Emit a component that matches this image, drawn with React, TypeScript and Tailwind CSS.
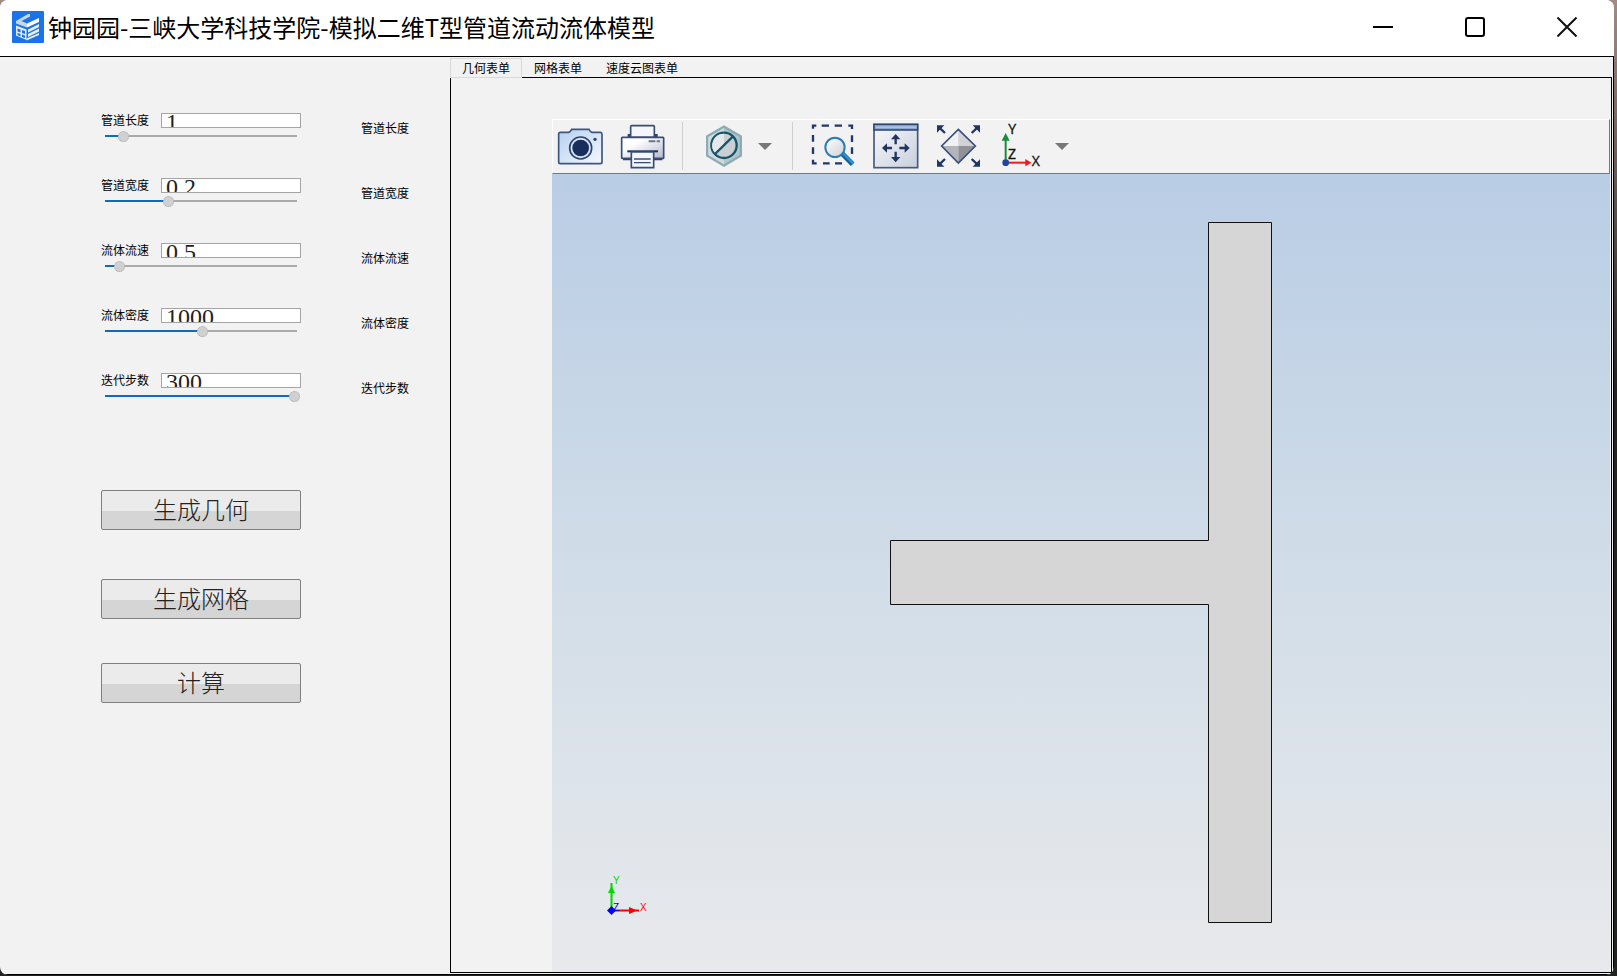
import { useState } from 'react';
import type { ReactNode } from 'react';

type Param = { id: string; label: string; value: number; max: number; step: number };

const params: Param[] = [
  { id: 'length', label: '管道长度', value: 1, max: 14, step: 1 },
  { id: 'width', label: '管道宽度', value: 0.2, max: 0.64, step: 0.01 },
  { id: 'speed', label: '流体流速', value: 0.5, max: 10, step: 0.1 },
  { id: 'density', label: '流体密度', value: 1000, max: 2000, step: 10 },
  { id: 'steps', label: '迭代步数', value: 300, max: 300, step: 1 },
];

const tabs = ['几何表单', '网格表单', '速度云图表单'];

const AppLogo = () => (
  <svg viewBox="0 0 32 32" className="size-8" aria-hidden="true">
    <rect width="32" height="32" rx="1" fill="#1a73e8" />
    <path d="M4 10 L16 3 H18 V5.500 L9.500 10 L15 12.500 V16.500 L4 12.500 Z" fill="#c9d6e6" />
    <path d="M15 12.500 L27 7 V11 L15 16.500 Z" fill="#fff" />
    <path d="M4 14.500 L14.500 18.500 V29 L4 24.500 Z M5.500 17.500 V20.500 L8.500 21.500 V18.500 Z M10 19 V22 L13 23 V20 Z M5.500 22 V24 L8.500 25.500 V23 Z M10 23.500 V26 L13 27 V24.500 Z" fill="#e3eaf3" fillRule="evenodd" />
    <path d="M16 18.500 L27 13 V16 L16 21.500 Z M16 23 L27 17.500 V20.500 L16 26 Z M14.500 27.500 L27 22 V24 L14.500 29.500 Z" fill="#e9eef5" />
  </svg>
);

const CameraIcon = () => (
  <svg viewBox="48 36 144 144" className="size-12">
    <defs>
      <linearGradient id="cam" x1="0" y1="0" x2="1" y2="1">
        <stop offset="0" stopColor="#b5d0ef" />
        <stop offset="1" stopColor="#f4f8fc" />
      </linearGradient>
    </defs>
    <path d="M60 67 H86 Q91 66 95 58 H147 Q151 66 156 67 H182 Q186 68 186 73 V156 Q186 161 181 161 H61 Q56 161 56 156 V72 Q56 67 60 67 Z" fill="url(#cam)" stroke="#3d5680" strokeWidth="5" />
    <circle cx="122" cy="114" r="33" fill="#dbe6f3" stroke="#2c4470" strokeWidth="5" />
    <circle cx="122" cy="114" r="25" fill="#182e5c" />
    <circle cx="165" cy="88" r="5" fill="#2c4470" />
  </svg>
);

const PrinterIcon = () => (
  <svg viewBox="237 36 144 144" className="size-12">
    <defs>
      <linearGradient id="prn" x1="0" y1="0" x2="1" y2="1">
        <stop offset="0.3" stopColor="#ffffff" />
        <stop offset="1" stopColor="#b4b9cc" />
      </linearGradient>
    </defs>
    <path d="M263 72 H353 V82 H263 Z M249 143 H273 V151 H249 Z M342 143 H367 V151 H342 Z" fill="#2c4068" />
    <rect x="245" y="82" width="126" height="63" rx="2" fill="url(#prn)" stroke="#3a4d75" strokeWidth="5" />
    <path d="M272 81 V50 Q272 47 275 47 H340 Q343 47 343 50 V81 Z" fill="#f4f6fa" stroke="#3a4d75" strokeWidth="5" />
    <path d="M262 124 H354" stroke="#1c305a" strokeWidth="6" />
    <path d="M274 126 H341 V173 H274 Z" fill="#f3f6fa" stroke="#3a4d75" strokeWidth="5" />
    <path d="M282 147 H332 M282 158 H332" stroke="#3a4d75" strokeWidth="4" />
    <path d="M326 94 H346 M350 94 H360" stroke="#6c7488" strokeWidth="6" />
  </svg>
);

const HexIcon = () => (
  <svg viewBox="480 36 144 144" className="size-12">
    <path d="M552 46 L606 77 V139 L552 171 L498 139 V77 Z" fill="#8cabb3" />
    <path d="M552 54 L599 81 V135 L552 163 L505 135 V81 Z" fill="#b3c5ca" />
    <path d="M552 54 V163 L505 135 V81 Z" fill="#cfdadd" />
    <circle cx="552" cy="106" r="38" fill="#c9cfd3" stroke="#15566b" strokeWidth="7" />
    <path d="M552 71 A35 35 0 0 0 527 131 L552 106 Z" fill="#e6e9eb" />
    <path d="M525 132 L579 79" stroke="#15566b" strokeWidth="7" />
  </svg>
);

const ZoomBoxIcon = () => (
  <svg viewBox="24 36 144 144" className="size-12">
    <defs>
      <linearGradient id="lens" x1="0" y1="0" x2="1" y2="1">
        <stop offset="0" stopColor="#ffffff" />
        <stop offset="1" stopColor="#cdd0d8" />
      </linearGradient>
    </defs>
    <path d="M39 56 V47 H49 M65 47 H87 M104 47 H126 M145 47 H156 V57 M156 76 V96 M156 112 V132 M39 75 V95 M39 112 V132 M39 149 V160 H50 M69 160 H89 M105 160 H126" fill="none" stroke="#20386b" strokeWidth="7" />
    <path d="M127 131 L158 163" stroke="#0f5e9e" strokeWidth="15" />
    <path d="M128 129 L160 161" stroke="#2d93d4" strokeWidth="7" />
    <circle cx="105" cy="112" r="29" fill="url(#lens)" stroke="#2a7cb4" strokeWidth="6" />
  </svg>
);

const ZoomExtentsIcon = () => (
  <svg viewBox="213 36 144 144" className="size-12">
    <defs>
      <linearGradient id="ext" x1="0" y1="0" x2="1" y2="1">
        <stop offset="0" stopColor="#f8f9fb" />
        <stop offset="1" stopColor="#c9cedb" />
      </linearGradient>
    </defs>
    <rect x="222" y="43" width="131" height="130" fill="url(#ext)" stroke="#44597f" strokeWidth="5" />
    <path d="M222 43 H353 V60 H222 Z" fill="#829ec5" stroke="#2c4470" strokeWidth="4" />
    <path d="M226 52 H349" stroke="#a9c2e2" strokeWidth="6" />
    <path d="M287 82 V103 M287 125 V147 M256 114 H276 M298 114 H319" stroke="#1f3663" strokeWidth="7" />
    <path d="M287 72 L301 88 H273 Z M287 157 L301 141 H273 Z M246 114 L261 100 V128 Z M329 114 L314 100 V128 Z" fill="#1f3663" />
  </svg>
);

const DiamondIcon = () => (
  <svg viewBox="402 36 144 144" className="size-12">
    <path d="M475 59 V108 H425 Z" fill="#f1f1f2" />
    <path d="M475 59 V108 H526 Z" fill="#d2d3d6" />
    <path d="M425 108 H475 V159 Z" fill="#b4b5b8" />
    <path d="M475 108 H526 L475 159 Z" fill="#919295" />
    <path d="M475 58 L526 108 L475 159 L425 108 Z" fill="none" stroke="#3a4f7c" strokeWidth="5" />
    <path d="M418 53 L435 69 M532 53 L515 69 M418 163 L435 147 M532 163 L515 147" stroke="#1f3663" strokeWidth="7" />
    <path d="M411 46 H433 L411 68 Z M540 46 H518 L540 68 Z M411 170 H433 L411 148 Z M540 170 H518 L540 148 Z" fill="#1f3663" />
  </svg>
);

const AxesIcon = () => (
  <svg viewBox="591 36 144 144" className="size-12 overflow-visible">
    <path d="M617 158 V88" stroke="#178c3c" strokeWidth="6" />
    <path d="M617 69 L629 92 H605 Z" fill="#178c3c" />
    <path d="M617 158 H680" stroke="#ee1c1c" strokeWidth="6" />
    <path d="M694 158 L676 147 V169 Z" fill="#ee1c1c" />
    <circle cx="617" cy="158" r="10" fill="#2044a0" />
    <g fontFamily="'Open Sans', sans-serif" fontSize="42" fill="#111" stroke="#111">
      <text x="625" y="72">Y</text>
      <text x="624" y="147">Z</text>
      <text x="695" y="169">X</text>
    </g>
  </svg>
);

const ToolButton = ({ label, children }: { label: string; children: ReactNode }) => (
  <button type="button" aria-label={label} className="shrink-0">
    {children}
  </button>
);

const Caret = ({ label }: { label: string }) => (
  <button type="button" aria-label={label} className="flex w-[18px] shrink-0 justify-center pt-0.5">
    <svg viewBox="0 0 14 8" className="h-2 w-3.5">
      <path d="M0 0 H14 L7 7 Z" fill="#777" />
    </svg>
  </button>
);

const Separator = () => <div className="h-12 w-px shrink-0 bg-[#cfcfcf]" />;

const ParamRow = ({ param }: { param: Param }) => {
  const [value, setValue] = useState(param.value);
  // the fill ends under the middle of the thumb
  const fill = 5 + (value / param.max) * 184;

  return (
    <div className="flex h-[65px] items-start">
      <div className="w-[200px]">
        <div className="flex h-[15px] items-start justify-between">
          <label htmlFor={param.id} className="text-xs leading-[13px]">{param.label}</label>
          <input
            id={param.id}
            type="text"
            value={value}
            onChange={(e) => setValue(Number(e.target.value) || 0)}
            className="h-[15px] w-[140px] border border-[#a5a5a5] bg-white px-1 pt-1 font-['Liberation_Serif',serif] text-2xl leading-6 text-[#222] outline-none"
          />
        </div>
        <input
          type="range"
          aria-label={param.label}
          min={0}
          max={param.max}
          step={param.step}
          value={value}
          onChange={(e) => setValue(Number(e.target.value))}
          style={{ backgroundImage: `linear-gradient(to right, #0f6cbd ${fill}px, #aaaaaa ${fill}px)` }}
          className="mt-0.5 ml-1 block h-3 w-[195px] appearance-none bg-[length:192px_2px] bg-[position:left_center] bg-no-repeat outline-none [&::-webkit-slider-thumb]:size-[11px] [&::-webkit-slider-thumb]:appearance-none [&::-webkit-slider-thumb]:rounded-full [&::-webkit-slider-thumb]:border [&::-webkit-slider-thumb]:border-dotted [&::-webkit-slider-thumb]:border-[#aaa] [&::-webkit-slider-thumb]:bg-[#d0d0d0]"
        />
      </div>
      <span className="ml-[60px] pt-2 text-xs leading-[13px]">{param.label}</span>
    </div>
  );
};

const ActionButton = ({ children }: { children: ReactNode }) => (
  <button
    type="button"
    className="h-10 w-[200px] rounded-xs border border-[#7f7f7f] bg-linear-to-b from-[#ebebeb] from-52% to-[#d5d5d5] to-52% pb-0.5 text-2xl leading-8 font-light text-[#222]"
  >
    {children}
  </button>
);

const TitleBar = () => (
  <header className="flex h-14 items-center bg-white pr-[37px] pb-0.5 pl-3">
    <AppLogo />
    <h1 className="ml-1 grow text-2xl whitespace-nowrap">钟园园-三峡大学科技学院-模拟二维T型管道流动流体模型</h1>
    <div className="flex gap-[72px]">
      <button type="button" aria-label="最小化">
        <svg viewBox="0 0 20 20" className="size-5"><path d="M0 10 H20" stroke="#000" strokeWidth="2" /></svg>
      </button>
      <button type="button" aria-label="最大化">
        <svg viewBox="0 0 20 20" className="size-5"><rect x="1" y="1" width="18" height="18" rx="2" fill="none" stroke="#000" strokeWidth="2" /></svg>
      </button>
      <button type="button" aria-label="关闭">
        <svg viewBox="0 0 20 20" className="size-5"><path d="M0.500 0.500 L19.500 19.500 M19.500 0.500 L0.500 19.500" stroke="#111" strokeWidth="2" /></svg>
      </button>
    </div>
  </header>
);

const Triad = () => (
  <svg viewBox="0 0 80 70" className="absolute bottom-[43px] left-[38px] h-[70px] w-20" aria-hidden="true">
    <path d="M21.500 51 V24" stroke="#6ee06e" strokeWidth="3" />
    <path d="M21.500 51 V24" stroke="#00d800" strokeWidth="1" />
    <path d="M21.500 27 L25 34 H18 Z" fill="#00d800" />
    <path d="M21 51.500 H49" stroke="#ff6e6e" strokeWidth="3" />
    <path d="M21 51.500 H49" stroke="#f00" strokeWidth="1" />
    <path d="M47 51.500 L39 48 V55 Z" fill="#f00" />
    <path d="M21.500 47 L26 51.500 L21.500 56 L17 51.500 Z" fill="#00f" />
    <g fontFamily="'Liberation Sans', sans-serif" fontSize="10">
      <text x="23" y="25" fill="#00d800">Y</text>
      <text x="23" y="52" fill="#00f">Z</text>
      <text x="50" y="52" fill="#f00">X</text>
    </g>
  </svg>
);

const Graphics = () => (
  <div className="relative flex grow items-center justify-center bg-linear-to-b from-[#b9cde5] via-[#d1dde8] to-[#e8e9ec] pb-0.5">
    <svg viewBox="0 0 382 701" className="h-[701px] w-[382px]" aria-label="T型管道">
      <path d="M318.500 0.500 H381.500 V700.500 H318.500 V382.500 H0.500 V318.500 H318.500 Z" fill="#d6d6d6" stroke="#111" />
    </svg>
    <Triad />
  </div>
);

const App = () => {
  const [active, setActive] = useState(0);

  return (
    <div className="flex min-h-screen bg-linear-to-b from-[#a38a84] to-[#222] to-40% pr-[3px] pb-px font-['Noto_Sans_CJK_SC',sans-serif] text-black">
      <div className="flex grow flex-col overflow-hidden rounded-lg bg-[#f2f2f2]">
        <TitleBar />
        <main className="flex grow border-t border-r border-b border-black">
          <aside className="w-[450px] shrink-0 pt-14 pl-[101px]">
            {params.map((param) => (
              <ParamRow key={param.id} param={param} />
            ))}
            <div className="mt-[52px] flex flex-col items-start">
              <ActionButton>生成几何</ActionButton>
              <div className="mt-[49px] mb-11"><ActionButton>生成网格</ActionButton></div>
              <ActionButton>计算</ActionButton>
            </div>
          </aside>

          <section className="flex grow flex-col pr-px pb-px">
            <div role="tablist" className="flex h-[21px] shrink-0 pt-px">
              {tabs.map((tab, i) => (
                <button
                  key={tab}
                  type="button"
                  role="tab"
                  aria-selected={i === active}
                  onClick={() => setActive(i)}
                  className={`text-xs leading-[18px] ${i === active ? 'border border-[#d9d9d9] px-[11px]' : 'border-b border-black px-3 pt-px'}`}
                >
                  {tab}
                </button>
              ))}
              <div className="grow border-b border-black" />
            </div>
            <div className="flex grow flex-col border-r border-b border-l border-black pt-[41px] pr-px pl-[101px]">
              <div role="toolbar" className="flex h-[55px] items-center gap-[15px] border-t border-r border-b border-l border-t-white border-r-[#777] border-b-[#777] border-l-white pb-0.5 pl-[3px]">
                <ToolButton label="截图"><CameraIcon /></ToolButton>
                <ToolButton label="打印"><PrinterIcon /></ToolButton>
                <Separator />
                <div className="flex items-center gap-2 pr-[3px] pl-0.5">
                  <ToolButton label="隐藏"><HexIcon /></ToolButton>
                  <Caret label="隐藏选项" />
                </div>
                <Separator />
                <ToolButton label="框选缩放"><ZoomBoxIcon /></ToolButton>
                <ToolButton label="缩放到范围"><ZoomExtentsIcon /></ToolButton>
                <ToolButton label="默认视图"><DiamondIcon /></ToolButton>
                <div className="flex items-center gap-2">
                  <ToolButton label="XY 视图"><AxesIcon /></ToolButton>
                  <Caret label="视图选项" />
                </div>
              </div>
              <Graphics />
            </div>
          </section>
        </main>
      </div>
    </div>
  );
};

export default App;
